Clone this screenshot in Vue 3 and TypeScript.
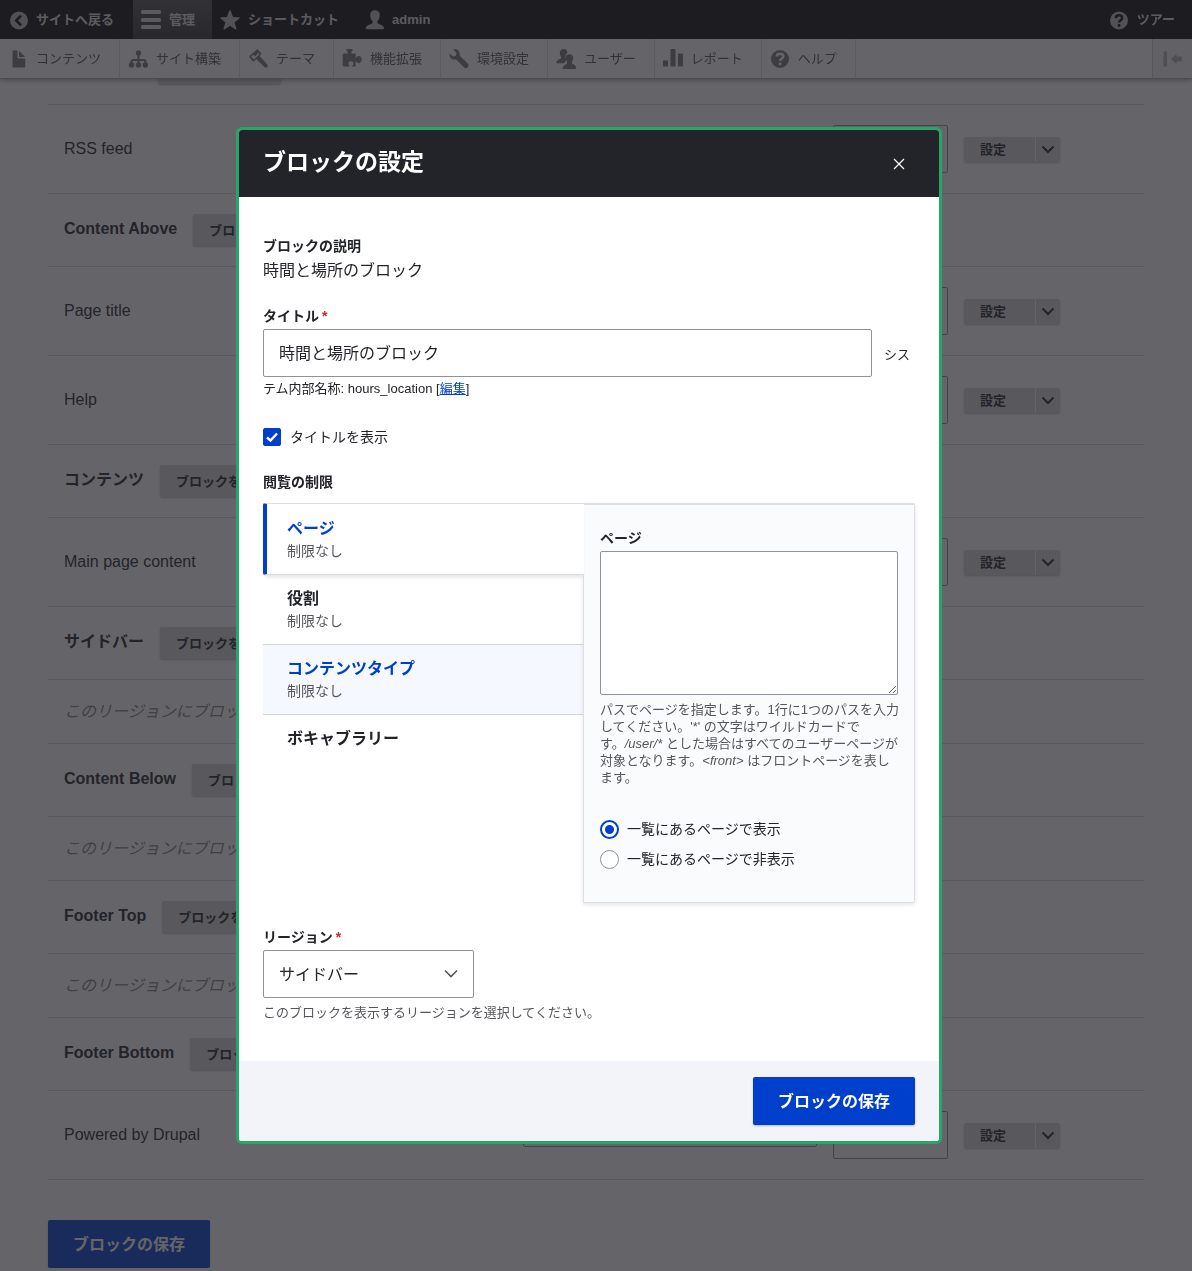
<script setup lang="ts">
import { ref } from 'vue'

type Row =
  | { kind: 'region'; name: string }
  | { kind: 'block'; name: string; region: string }
  | { kind: 'empty' }

const rows: Row[] = [
  { kind: 'region', name: 'Social Bar' },
  { kind: 'block', name: 'RSS feed', region: 'Social Bar' },
  { kind: 'region', name: 'Content Above' },
  { kind: 'block', name: 'Page title', region: 'Content Above' },
  { kind: 'block', name: 'Help', region: 'Content Above' },
  { kind: 'region', name: 'コンテンツ' },
  { kind: 'block', name: 'Main page content', region: 'コンテンツ' },
  { kind: 'region', name: 'サイドバー' },
  { kind: 'empty' },
  { kind: 'region', name: 'Content Below' },
  { kind: 'empty' },
  { kind: 'region', name: 'Footer Top' },
  { kind: 'empty' },
  { kind: 'region', name: 'Footer Bottom' },
  { kind: 'block', name: 'Powered by Drupal', region: 'Footer Bottom' },
]

const trayItems = [
  { icon: 'file', label: 'コンテンツ' },
  { icon: 'structure', label: 'サイト構築' },
  { icon: 'theme', label: 'テーマ' },
  { icon: 'extend', label: '機能拡張' },
  { icon: 'config', label: '環境設定' },
  { icon: 'people', label: 'ユーザー' },
  { icon: 'report', label: 'レポート' },
  { icon: 'help', label: 'ヘルプ' },
]

const tabs = [
  { id: 'pages', label: 'ページ', summary: '制限なし' },
  { id: 'roles', label: '役割', summary: '制限なし' },
  { id: 'types', label: 'コンテンツタイプ', summary: '制限なし' },
  { id: 'vocab', label: 'ボキャブラリー', summary: '' },
]

const activeTab = ref('pages')
const highlightedTab = ref('types')
const title = ref('時間と場所のブロック')
const showTitle = ref(true)
const paths = ref('')
const pageMode = ref('show')
const region = ref('サイドバー')
</script>

<template>
  <div class="page">
    <header class="toolbar">
      <div class="bar">
        <a class="bar-item" href="#">
          <svg class="icon" viewBox="0 0 20 20" aria-hidden="true">
            <circle cx="11" cy="10.500" r="9" />
            <path class="cut" d="M13 5.700 8.300 10.500l4.700 4.800" />
          </svg>
          サイトへ戻る
        </a>
        <nav class="bar-nav">
          <a class="bar-item current" href="#">
            <svg class="icon" viewBox="0 0 20 20" aria-hidden="true">
              <rect y="0" width="20" height="4" rx="1.500" />
              <rect y="8" width="20" height="4" rx="1.500" />
              <rect y="15" width="20" height="4" rx="1.500" />
            </svg>
            管理
          </a>
          <a class="bar-item" href="#">
            <svg class="icon" viewBox="0 0 20 20" aria-hidden="true">
              <path d="M9.200.8q.8-1 1.500 0l2.300 6.200 6.200.3q1 .5.2 1.300l-4.800 4 1.900 6q0 1.200-1.100.8L10 15.800l-5.400 3.600q-1.200.4-1.100-.8l1.900-6-4.800-4Q0 7.800.8 7.300L6.900 7Z" />
            </svg>
            ショートカット
          </a>
          <a class="bar-item" href="#">
            <svg class="icon" viewBox="0 0 20 20" aria-hidden="true">
              <path d="M11 .3c3 0 4.800 1.900 4.800 4.800 0 2.700-1 4.900-2.300 6.200-.6 1.500.3 2.400 2 3 2.700.9 4.200 1.400 4.500 4.200 0 .4-.2.8-.7.8H2.400c-.5 0-.7-.4-.7-.8.3-2.800 2.100-3.300 4.800-4.200 1.700-.6 2.600-1.500 2-3C7.200 10 6.200 7.800 6.200 5.100 6.200 2.200 8 .3 11 .3Z" />
            </svg>
            admin
          </a>
        </nav>
        <a class="bar-item tour" href="#">
          <svg class="icon" viewBox="0 0 20 20" aria-hidden="true">
            <circle cx="10" cy="10.500" r="9" />
            <path class="cut" d="M6.800 8.100C7 6 8.200 5.300 10 5.300c2 0 3.200 1 3.200 2.700 0 2.200-3.100 2.200-3.100 4.500M10.100 14.100v2.600" />
          </svg>
          ツアー
        </a>
      </div>
      <nav class="tray">
        <a v-for="item in trayItems" :key="item.icon" class="tray-item" href="#">
          <svg class="icon" viewBox="0 0 20 20" aria-hidden="true">
            <g v-if="item.icon === 'file'">
              <path d="M5.200 1.500H9.500v7.300c0 .5.2.7.7.7h7v8.300q0 .7-.7.7H5.200q-.7 0-.7-.7V2.200q0-.7.7-.7Z" />
              <path d="M11 1.800 17.200 8H11Z" />
            </g>
            <g v-else-if="item.icon === 'structure'">
              <path class="line" d="M10.500 4v12M3.500 16v-3q0-2 2-2h10q2 0 2 2v3" />
              <circle cx="10.500" cy="4" r="2.700" />
              <circle cx="3.500" cy="16" r="2.700" />
              <circle cx="10.500" cy="16" r="2.700" />
              <circle cx="17.300" cy="16" r="2.700" />
            </g>
            <g v-else-if="item.icon === 'theme'">
              <path
                fill-rule="evenodd"
                d="M8.500.7q.8-.7 1.600.1l2.900 3.100q.7.800 0 1.600L11.500 7l7.800 8.600q1 1.600-.4 2.700-1.400.9-2.700-.4L8.300 10l-2 2.300q-.8.700-1.600 0L1.600 8.600q-.7-.7 0-1.500ZM5.200 5.700 3.300 7.800 6 10.500l5.600-5.400-1-1.200-3.800 3.700Z"
              />
            </g>
            <g v-else-if="item.icon === 'extend'">
              <path d="M5 0h5q.8 0 .8.800 0 .9-.8 1.100-.6.300-.6.900v1.700h4.200V9c1.200 0 1.400-2 3-2 1.700 0 3.200 1.600 3.200 3.600s-1.500 3.600-3.200 3.600c-1.600 0-1.800-2-3-2v5.300h-3.400c0-1.500 1.200-1.400 1.200-3 0-1.300-1-2.200-2.500-2.200s-2.500.9-2.500 2.200c0 1.600 1.200 1.500 1.200 3H2q-1.300 0-1.300-1.200V5.800q0-1.300 1.300-1.300h3.600V2.800q0-.6-.6-.9Q4.200 1.700 4.200.8T5 0Z" />
            </g>
            <g v-else-if="item.icon === 'config'">
              <path d="M5 .3C8.300-.5 11.300 2 10.700 5.600l-.1 1 8.300 8.200c2 2.600-1.200 5.700-3.800 3.800L6.900 10.300C3.600 11.500.3 8.900.5 5.200q0-.7.7-.1l2.600 2.300L6.700 7l.7-3L4.700 1q-.4-.5.3-.7Z" />
            </g>
            <g v-else-if="item.icon === 'people'">
              <path d="M7.700 0c2.600 0 3.900 1.700 3.600 4-1.200 1-2 2.400-1.800 4.400l.7 2.600c-.7 1.500-1.200 2.300-2.700 3.300H.4c0-2.700 1-3.500 3.400-4.300 1.400-.5 1.600-1.100 1.200-2.300C3.100 4.900 3.300 0 7.700 0Z" />
              <path d="M13.500 5.200c3 0 4.200 2.500 3.400 5.300-.4 1.400-1.300 2.700-.9 3.700.4 1.300 4.400.9 4 5.800H6.600c0-3.800 3.700-4.200 4.400-5.500.4-1.200-.5-2.200-.9-3.700-.8-3 .4-5.600 3.400-5.600Z" />
            </g>
            <g v-else-if="item.icon === 'report'">
              <rect x="0" y="11.500" width="5" height="6" rx=".5" />
              <rect x="7.500" y="0" width="5" height="17.500" rx=".5" />
              <rect x="15" y="4.500" width="5" height="13" rx=".5" />
            </g>
            <g v-else>
              <circle cx="10" cy="10" r="9" />
              <path class="cut" d="M6.800 7.600C7 5.500 8.200 4.800 10 4.800c2 0 3.200 1 3.200 2.700 0 2.200-3.100 2.200-3.100 4.500M10.100 13.600v2.600" />
            </g>
          </svg>
          {{ item.label }}
        </a>
        <button class="tray-toggle" type="button" aria-label="縦向き">
          <svg viewBox="0 0 20 20" aria-hidden="true">
            <path d="M.500 2.500H4v15H.500ZM8 10l5.500-5v2.500h4q1.500 0 1.500 1.500v2q0 1.500-1.500 1.500h-4V15Z" />
          </svg>
        </button>
      </nav>
    </header>

    <main class="content">
      <table class="blocks">
        <colgroup>
          <col>
          <col class="col-region">
          <col class="col-weight">
          <col class="col-ops">
        </colgroup>
        <tbody>
          <tr v-for="(row, i) in rows" :key="i">
            <td v-if="row.kind === 'region'" colspan="4">
              <div class="region">
                <strong>{{ row.name }}</strong>
                <button class="small-button" type="button">ブロックを配置</button>
              </div>
            </td>
            <td v-else-if="row.kind === 'empty'" colspan="4" class="empty">
              このリージョンにブロックはありません
            </td>
            <template v-else>
              <td class="block-name">{{ row.name }}</td>
              <td>
                <select class="select region-select" :aria-label="row.name + ' のリージョン'">
                  <option>{{ row.region }}</option>
                </select>
              </td>
              <td>
                <select class="select weight-select" :aria-label="row.name + ' のウエイト'">
                  <option></option>
                </select>
              </td>
              <td>
                <div class="dropbutton">
                  <button class="drop-main" type="button">設定</button>
                  <button class="drop-toggle" type="button" aria-label="操作の一覧">
                    <svg viewBox="0 0 14 9" aria-hidden="true"><path d="m1.500 1.500 5.500 5.500 5.500-5.500" /></svg>
                  </button>
                </div>
              </td>
            </template>
          </tr>
        </tbody>
      </table>
      <button class="primary" type="button">ブロックの保存</button>
    </main>

    <div class="overlay">
      <section class="dialog" role="dialog" aria-modal="true" aria-labelledby="dialog-title">
        <header class="dialog-head">
          <h1 id="dialog-title">ブロックの設定</h1>
          <button class="close" type="button" aria-label="閉じる">
            <svg viewBox="0 0 12 12" aria-hidden="true"><path d="m1 1 10 10M11 1 1 11" /></svg>
          </button>
        </header>

        <form class="dialog-body" @submit.prevent>
          <div class="label">ブロックの説明</div>
          <div class="static">時間と場所のブロック</div>

          <label class="label field-gap" for="title">タイトル<span class="required">*</span></label>
          <div class="machine">
            <input id="title" v-model="title" class="text" type="text"><span class="suffix">システム内部名称: hours_location [<a href="#">編集</a>]</span>
          </div>

          <div class="check">
            <input id="show-title" v-model="showTitle" type="checkbox">
            <svg v-if="showTitle" class="tick" viewBox="0 0 18 18" aria-hidden="true"><path d="m4 9.500 3.500 3L14 5.500" /></svg>
            <label for="show-title">タイトルを表示</label>
          </div>

          <div class="label">閲覧の制限</div>
          <div class="tabs">
            <div class="tab-list" role="tablist">
              <button
                v-for="tab in tabs"
                :key="tab.id"
                type="button"
                role="tab"
                class="tab"
                :class="{ active: tab.id === activeTab, hovered: tab.id === highlightedTab }"
                :aria-selected="tab.id === activeTab"
                @click="activeTab = tab.id"
                @mouseenter="highlightedTab = tab.id"
              >
                <strong>{{ tab.label }}</strong>
                <span v-if="tab.summary">{{ tab.summary }}</span>
              </button>
            </div>
            <div class="panel" role="tabpanel">
              <label class="label" for="paths">ページ</label>
              <textarea id="paths" v-model="paths"></textarea>
              <p class="hint path-hint">パスでページを指定します。1行に1つのパスを入力してください。'*' の文字はワイルドカードです。<em>/user/*</em> とした場合はすべてのユーザーページが対象となります。<em>&lt;front&gt;</em> はフロントページを表します。</p>
              <div class="radios">
                <label><input v-model="pageMode" type="radio" name="mode" value="show">一覧にあるページで表示</label>
                <label><input v-model="pageMode" type="radio" name="mode" value="hide">一覧にあるページで非表示</label>
              </div>
            </div>
          </div>

          <label class="label field-gap" for="region">リージョン<span class="required">*</span></label>
          <div class="select-wrap">
            <select id="region" v-model="region" class="select">
              <option>サイドバー</option>
              <option>コンテンツ</option>
            </select>
            <svg class="chevron" viewBox="0 0 14 9" aria-hidden="true"><path d="m1 1.500 6 6 6-6" /></svg>
          </div>
          <p class="hint">このブロックを表示するリージョンを選択してください。</p>
        </form>

        <footer class="dialog-foot">
          <button class="primary" type="button">ブロックの保存</button>
        </footer>
      </section>
    </div>
  </div>
</template>

<style>
body {
  margin: 0;
  background: #fff;
}
</style>

<style scoped>
.page,
.page * {
  box-sizing: border-box;
}

.page {
  font-family: "Liberation Sans", "Noto Sans CJK JP", sans-serif;
  font-size: 16px;
  line-height: 24px;
  color: #232429;
}

button,
input,
select,
textarea {
  font-family: inherit;
  color: inherit;
}

button {
  border: 0;
  padding: 0;
  cursor: pointer;
}

/* Toolbar */
.toolbar {
  position: fixed;
  top: 0;
  left: 0;
  right: 0;
  z-index: 1;
  font-size: 13px;
}

.bar {
  display: flex;
  gap: 2px;
  height: 39px;
  background: #0f0f0f;
}

.bar-nav {
  display: flex;
}

.bar-item,
.tray-item {
  display: flex;
  align-items: center;
  gap: 8px;
  padding: 0 17px 0 8px;
  white-space: nowrap;
  text-decoration: none;
}

.bar-item {
  color: #ddd;
  font-weight: bold;
}

.bar-item.current {
  background: linear-gradient(#555, #343434);
}

.bar-item.current .icon {
  fill: #ddd;
}

.tour {
  margin-left: auto;
}

.icon {
  flex: none;
  width: 20px;
  height: 20px;
  fill: #bebebe;
}

.cut {
  fill: none;
  stroke: #0f0f0f;
  stroke-width: 2.6;
}

.tray {
  display: flex;
  height: 40px;
  background: #fff;
  border-bottom: 1px solid #aaa;
  box-shadow: 0 1px 5px rgba(0, 0, 0, 0.4);
}

.tray-item {
  padding-right: 18px;
  border-right: 1px solid #ddd;
  color: #565656;
}

.tray .icon {
  fill: #787878;
}

.tray .cut {
  stroke: #fff;
}

.line {
  fill: none;
  stroke: #787878;
  stroke-width: 2;
}

.tray-toggle {
  width: 40px;
  margin-left: auto;
  border-left: 1px solid #ccc;
  background: #f5f5f5;
}

.tray-toggle svg {
  display: block;
  width: 20px;
  height: 20px;
  margin: 0 auto;
  fill: #b4b4b4;
}

/* Block listing */
.content {
  padding: 32px 48px 0;
}

.blocks {
  width: 100%;
  table-layout: fixed;
  border-spacing: 0;
}

.col-region {
  width: 310px;
}

.col-weight {
  width: 131px;
}

.col-ops {
  width: 196px;
}

.blocks td {
  padding: 20px 0 20px 16px;
  border-bottom: 1px solid #d4d4d8;
}

.blocks .empty {
  height: 64px;
  padding-top: 0;
  padding-bottom: 0;
  font-style: italic;
  color: #828388;
}

.region {
  display: flex;
  gap: 16px;
  height: 32px;
  line-height: 30px;
}

.small-button {
  height: 32px;
  padding: 0 16px 2px;
  border-radius: 2px;
  background: #d4d4d8;
  box-shadow: 0 1px 2px rgba(0, 0, 0, 0.25);
  font-size: 13px;
  font-weight: bold;
}

.select {
  display: block;
  width: 100%;
  height: 48px;
  padding: 0 15px;
  appearance: none;
  border: 1px solid #8e929c;
  border-radius: 2px;
  background: #fff;
  font-size: 16px;
}

.region-select {
  height: 24px;
  font-size: 13px;
}

.dropbutton {
  display: flex;
  gap: 1px;
  width: 96px;
  height: 25px;
  border-radius: 2px;
  box-shadow: 0 1px 2px rgba(0, 0, 0, 0.25);
}

.drop-main,
.drop-toggle {
  background: #d4d4d8;
}

.drop-main {
  flex: 1;
  padding: 0 0 2px 16px;
  border-radius: 2px 0 0 2px;
  font-size: 13px;
  font-weight: bold;
  text-align: left;
}

.drop-toggle {
  width: 24px;
  border-radius: 0 2px 2px 0;
}

.drop-toggle svg {
  display: block;
  width: 14px;
  height: 9px;
  margin: 0 auto;
  fill: none;
  stroke: #222330;
  stroke-width: 2;
}

.primary {
  height: 48px;
  padding: 0 25px 2px;
  border-radius: 2px;
  background: #003ecc;
  box-shadow: 0 1px 2px rgba(0, 0, 0, 0.25);
  color: #fff;
  font-size: 16px;
  font-weight: bold;
}

.content > .primary {
  display: block;
  margin-top: 40px;
}

/* Dialog */
.overlay {
  position: fixed;
  inset: 0;
  z-index: 2;
  display: flex;
  align-items: center;
  justify-content: center;
  padding-right: 14px;
  background: rgba(35, 36, 41, 0.7);
}

.dialog {
  width: 706px;
  max-width: 100%;
  border: 3px solid #26a769;
  border-radius: 6px;
  background: #fff;
  overflow: hidden;
}

.dialog-head {
  display: flex;
  align-items: center;
  justify-content: space-between;
  height: 67px;
  padding: 0 24px;
  background: #232429;
  color: #fff;
}

.dialog-head h1 {
  margin: 0;
  padding-bottom: 4px;
  font-size: 23px;
  line-height: 30px;
}

.close {
  display: grid;
  place-items: center;
  width: 32px;
  height: 32px;
  background: none;
}

.close svg {
  width: 12px;
  height: 12px;
  stroke: #fff;
  stroke-width: 1.2;
}

.dialog-body {
  padding: 40px 24px;
}

.label {
  display: block;
  margin-bottom: 4px;
  font-size: 14px;
  font-weight: bold;
  line-height: 18px;
}

.field-gap {
  margin-top: 24px;
}

.required {
  margin-left: 3px;
  color: #dc2323;
}

.machine {
  font-size: 13px;
}

.text {
  width: calc(100% - 43px);
  height: 48px;
  margin-right: 12px;
  padding: 0 15px 2px;
  border: 1px solid #8e929c;
  border-radius: 2px;
  background: #fff;
  font-size: 16px;
}

a {
  color: #003ecc;
}

.check {
  position: relative;
  display: flex;
  align-items: center;
  gap: 9px;
  height: 18px;
  margin: 27px 0;
  font-size: 14px;
}

.check input {
  width: 18px;
  height: 18px;
  margin: 0;
  appearance: none;
  border: 1px solid #8e929c;
  border-radius: 2px;
}

.check input:checked {
  border-color: #003ecc;
  background: #003ecc;
}

.tick {
  position: absolute;
  left: 0;
  top: 0;
  width: 18px;
  height: 18px;
  fill: none;
  stroke: #fff;
  stroke-width: 2.4;
  pointer-events: none;
}

.tabs {
  display: grid;
  grid-template-columns: 320px minmax(0, 1fr);
  margin: 12px 0 25px;
}

.tab {
  display: block;
  width: 100%;
  padding: 12px 24px 13px;
  border-bottom: 1px solid #d4d4d8;
  background: #fff;
  text-align: left;
}

.tab strong,
.tab span {
  display: block;
}

.tab strong {
  font-size: 16px;
  line-height: 24px;
}

.tab span {
  color: #55565b;
  font-size: 14px;
  line-height: 20px;
}

.tab:last-child {
  border-bottom: 0;
}

.tab.hovered {
  background: #f5f8ff;
}

.tab.hovered strong,
.tab.active strong {
  color: #003ecc;
}

.tab.active {
  position: relative;
  width: calc(100% + 1px);
  height: 72px;
  padding-left: 20px;
  border-top: 1px solid #dedfe4;
  border-bottom-color: #dedfe4;
  border-left: 4px solid #003ecc;
  border-radius: 2px 0 0 2px;
  box-shadow: 0 4px 4px -2px rgba(0, 0, 0, 0.12);
}

.panel {
  padding: 24px 16px 28px;
  border: 1px solid #dedfe4;
  border-top-width: 2px;
  border-radius: 0 2px 2px 0;
  background: #fafbfd;
  box-shadow: 0 2px 4px rgba(0, 0, 0, 0.1);
}

textarea {
  display: block;
  width: 100%;
  height: 144px;
  padding: 12px 15px;
  border: 1px solid #8e929c;
  border-radius: 2px;
  background: #fff;
  font-size: 16px;
  resize: vertical;
}

.hint {
  margin: 6px 0 0;
  color: #55565b;
  font-size: 13px;
  line-height: 17px;
}

.path-hint {
  margin-right: -4px;
}

.radios {
  margin-top: 28px;
  font-size: 14px;
}

.radios label {
  display: flex;
  align-items: center;
  gap: 8px;
  height: 30px;
}

.radios input {
  width: 19px;
  height: 19px;
  margin: 0;
  appearance: none;
  border: 1px solid #8e929c;
  border-radius: 50%;
  background: #fff;
}

.radios input:checked {
  border: 2px solid #003ecc;
  background: radial-gradient(circle, #003ecc 4px, #fff 5px);
}

.select-wrap {
  position: relative;
  width: 211px;
}

.chevron {
  position: absolute;
  right: 16px;
  top: 19px;
  width: 14px;
  height: 9px;
  fill: none;
  stroke: #55565b;
  stroke-width: 1.6;
  pointer-events: none;
}

.dialog-foot {
  display: flex;
  justify-content: flex-end;
  padding: 16px 24px;
  background: #f3f4f9;
}
</style>
